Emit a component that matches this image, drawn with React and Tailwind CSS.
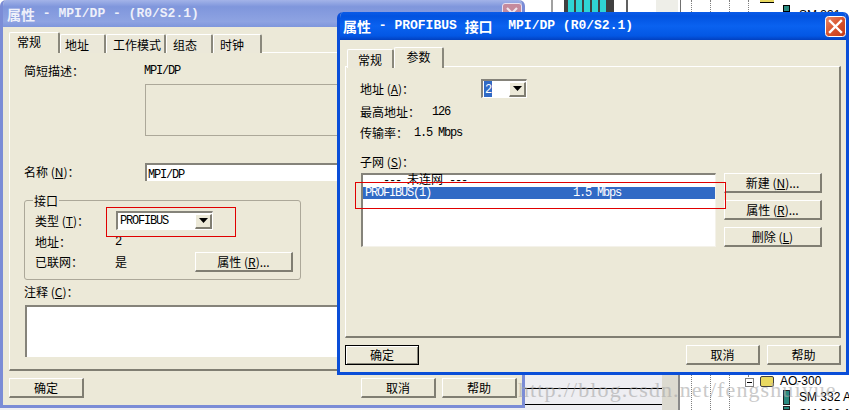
import React from 'react';

// latin runs are narrower than the CJK around them
const L = ({ children, className = '' }) => (
  <span className={`font-['Liberation_Mono'] tracking-[-1.2px] ${className}`}>{children}</span>
);

const Btn = ({ children, className = '', primary = false }) => (
  <div
    className={`h-5 flex items-center justify-center bg-[#ece9d8] shrink-0 ${
      primary
        ? 'border border-black shadow-[inset_1px_1px_0_#fff,inset_-1px_-1px_0_#8a887c]'
        : 'border-t border-l border-t-white border-l-white border-b-2 border-r-2 border-b-[#807e72] border-r-[#807e72]'
    } ${className}`}
  >
    {children}
  </div>
);

const Tab = ({ children, active, width, inset }) => (
  <div
    style={{ width, paddingLeft: inset }}
    className={`flex ${inset ? 'justify-start' : 'justify-center'} border-t border-l border-t-white border-l-white border-r-2 border-r-[#8a887c] rounded-t-[2px] ${
      active ? 'h-[21px] pt-[2px] z-10 bg-[#ece9d8] relative' : 'h-[19px] mt-[2px] pt-[3px] bg-[#ebe8d9]'
    }`}
  >
    {children}
  </div>
);

const Arrow = () => (
  <svg width="9" height="5" viewBox="0 0 9 5">
    <polygon points="0,0 9,0 4.5,5" fill="#000" />
  </svg>
);

const Combo = ({ children, className = '' }) => (
  <div className={`h-[19px] flex items-center justify-between bg-white border-t-2 border-l-2 border-t-[#85837a] border-l-[#85837a] border-b border-r border-b-white border-r-white shrink-0 ${className}`}>
    {children}
    <div className="w-[17px] h-[15px] flex items-center justify-center bg-[#ece9d8] border-t border-l border-t-white border-l-white border-b-2 border-r-2 border-b-[#807e72] border-r-[#807e72]">
      <Arrow />
    </div>
  </div>
);

const CloseBtn = () => (
  <svg width="21" height="21" viewBox="0 0 21 21">
    <defs>
      <linearGradient id="closeRed" x1="0" y1="0" x2="1" y2="1">
        <stop offset="0" stopColor="#e88a6a" />
        <stop offset="0.5" stopColor="#d9532c" />
        <stop offset="1" stopColor="#c23a18" />
      </linearGradient>
    </defs>
    <rect x="0.5" y="0.5" width="20" height="20" rx="3" fill="url(#closeRed)" stroke="#fff" />
    <path d="M5 5 L16 16 M16 5 L5 16" stroke="#fff" strokeWidth="2.4" strokeLinecap="square" />
  </svg>
);

const Dots = ({ className }) => (
  <div className={`absolute w-px border-l border-dotted border-[#808080] ${className}`} />
);

const Backdrop = () => (
  <>
    {/* bits of the program behind the dialogs */}
    <div className="absolute left-[525px] top-0 w-[324px] h-3 bg-white" />
    <div className="absolute left-[551px] top-0 w-[2px] h-3 bg-[#a0a0a0]" />
    <div className="absolute left-[564px] top-0 w-[50px] h-3 flex gap-[2px] bg-[#404040] pl-[4px]">
      <div className="w-[6px] bg-[#2fd4d4]" />
      <div className="w-[6px] bg-[#2fd4d4]" />
      <div className="w-[6px] bg-[#2fd4d4]" />
      <div className="w-[6px] bg-[#2fd4d4]" />
      <div className="w-[6px] bg-[#2fd4d4]" />
    </div>
    <div className="absolute left-[626px] top-0 w-[2px] h-3 bg-[#606060]" />
    <div className="absolute left-[656px] top-0 w-[22px] h-3 bg-[#eeeee8]" />
    <div className="absolute left-[680px] top-0 w-px h-3 bg-[#707070]" />
    <Dots className="left-[691px] top-0 h-3" />
    <Dots className="left-[710px] top-0 h-3" />
    <Dots className="left-[729px] top-0 h-3" />
    <Dots className="left-[748px] top-0 h-3" />
    <div className="absolute left-[760px] top-0 w-[14px] h-[3px] bg-[#e8d860] border-b border-black" />
    <div className="absolute left-[783px] top-[5px] w-[7px] h-[7px] bg-[#2a8a80] border border-black" />
    <div className="absolute left-[799px] top-[8px] h-[4px] overflow-hidden font-['Liberation_Sans'] text-[12px] leading-[14px] text-black">SM 331 AI</div>

    <div className="absolute left-0 top-[408px] w-[662px] h-[2px] bg-[#eeeef2]" />
    <div className="absolute left-[525px] top-[375px] w-[137px] h-[35px] bg-[#eeeef2]" />
    <div className="absolute left-[525px] top-[388px] w-[137px] h-px bg-black" />
    <div className="absolute left-[525px] top-[404px] w-[137px] h-px bg-black" />
    <div className="absolute left-[662px] top-[375px] w-[16px] h-[35px] bg-[#dcdad0]" />
    <div className="absolute left-[678px] top-[375px] w-[2px] h-[35px] bg-[#8a8a8a]" />
    <div className="absolute left-[680px] top-[375px] w-[169px] h-[35px] bg-white" />
    <Dots className="left-[691px] top-[375px] h-[35px]" />
    <Dots className="left-[710px] top-[375px] h-[35px]" />
    <Dots className="left-[729px] top-[375px] h-[35px]" />
    <Dots className="left-[748px] top-[375px] h-[10px]" />
    <div className="absolute left-[745px] top-[378px] w-[9px] h-[9px] bg-white border border-[#808080] flex items-center justify-center">
      <div className="w-[5px] h-px bg-black" />
    </div>
    <div className="absolute left-[760px] top-[376px] w-[14px] h-[11px] bg-[#e8d860] border border-[#404040] rounded-[2px]" />
    <div className="absolute left-[780px] top-[374px] font-['Liberation_Sans'] text-[12px] leading-[14px] text-black">AO-300</div>
    <div className="absolute left-[783px] top-[390px] w-[7px] h-[15px] bg-[#2a8a80] border border-[#202020]" />
    <div className="absolute left-[783px] top-[406px] w-[7px] h-[4px] bg-[#2a8a80] border border-[#202020]" />
    <div className="absolute left-[799px] top-[390px] font-['Liberation_Sans'] text-[12px] leading-[14px] text-black whitespace-nowrap">SM 332 AO</div>
    <div className="absolute left-[799px] top-[407px] h-[3px] overflow-hidden font-['Liberation_Sans'] text-[12px] leading-[14px] text-black whitespace-nowrap">SM 332 AO</div>
  </>
);

const BackDialog = () => (
  <div className="absolute left-0 top-0 w-[525px] h-[408px] rounded-t-[6px] overflow-hidden border-x-[3px] border-b-[3px] border-[#7b8cd6] bg-[#ece9d8] flex flex-col">
    <div className="h-[27px] shrink-0 -mx-[3px] pl-[7px] pt-[5px] flex bg-[linear-gradient(180deg,#a3b3e8_0%,#7f96dc_25%,#8ea3e2_80%,#7f96dc_100%)] text-[#eef0fa]">
      <span className="text-[14px] leading-[18px] font-bold">属性</span>
      <span className="font-['Liberation_Mono'] text-[13px] leading-[18px] font-bold whitespace-pre"> - MPI/DP - (R0/S2.1)</span>
    </div>
    <div className="flex flex-col pl-[6px] pr-[5px] pt-[5px]">
      <div className="flex h-5 relative">
        <Tab active width={51} inset={7}>常规</Tab>
        <Tab width={46} inset={4}>地址</Tab>
        <Tab width={60} inset={6}>工作模式</Tab>
        <Tab width={47} inset={6}>组态</Tab>
        <Tab width={49} inset={6}>时钟</Tab>
      </div>
      <div className="h-[319px] border-t border-l border-t-white border-l-white border-b-2 border-r-2 border-b-[#807e72] border-r-[#807e72] pl-[14px] pt-[11px] flex flex-col">
        <div className="flex h-[14px]">
          <div className="w-[120px]">简短描述：</div>
          <L>MPI/DP</L>
        </div>
        <div className="ml-[121px] mt-[6px] h-[52px] border border-[#aca899] shrink-0" />
        <div className="flex items-center h-[18px] mt-[27px]">
          <div className="w-[121px]">名称 (<u>N</u>)：</div>
          <div className="flex-1 h-[18px] bg-white border-t-2 border-l-2 border-t-[#85837a] border-l-[#85837a] pl-[1px] leading-[15px]">
            <L>MPI/DP</L>
          </div>
        </div>
        <div className="relative mt-[19px] ml-0 w-[277px] h-[80px] border border-[#aca899] rounded-[3px] pl-[10px] pt-[10px] shrink-0">
          <div className="absolute left-[8px] -top-[7px] bg-[#ece9d8] px-[1px] leading-[14px]">接口</div>
          <div className="flex items-center">
            <div className="w-[81px]">类型 (<u>T</u>)：</div>
            <Combo className="w-[97px] pl-[2px]"><L>PROFIBUS</L></Combo>
          </div>
          <div className="flex mt-[5px] h-[14px] items-center">
            <div className="w-[80px]">地址：</div>
            <L>2</L>
          </div>
          <div className="flex items-center mt-[3px]">
            <div className="w-[80px]">已联网：</div>
            <div className="w-[80px]">是</div>
            <Btn className="w-[98px]">属性 (<u>R</u>)...</Btn>
          </div>
        </div>
        <div className="h-[14px] mt-[5px]">注释 (<u>C</u>)：</div>
        <div className="mt-[6px] h-[52px] ml-[1px] bg-white border-t-2 border-l-2 border-t-[#85837a] border-l-[#85837a] shrink-0" />
      </div>
      <div className="flex justify-between mt-[7px]">
        <Btn className="w-[75px]">确定</Btn>
        <div className="flex gap-[6px]">
          <Btn className="w-[75px]">取消</Btn>
          <Btn className="w-[75px]">帮助</Btn>
        </div>
      </div>
    </div>
    {/* close box of the inactive window, mostly under the front dialog */}
    <div className="absolute left-[499px] top-[3px] w-[20px] h-[20px] rounded-[3px] bg-[#c58a9c] border border-[#e8e0f0] flex justify-center pt-[2px]">
      <svg width="14" height="14" viewBox="0 0 14 14">
        <path d="M2 2 L12 12 M12 2 L2 12" stroke="#efe6ee" strokeWidth="2.2" />
      </svg>
    </div>
  </div>
);

const FrontDialog = () => (
  <div className="absolute left-[337px] top-3 w-[512px] h-[363px] rounded-t-[6px] overflow-hidden border-x-[3px] border-b-[3px] border-[#0a4ed8] bg-[#ece9d8] flex flex-col">
    <div className="h-7 shrink-0 -mx-[3px] pl-[6px] pr-[3px] flex items-center justify-between bg-[linear-gradient(180deg,#0a5be8_0%,#0253e0_15%,#0a62f0_50%,#0357e4_85%,#0240c0_100%)] text-white">
      <div className="flex items-center">
        <span className="text-[14px] font-bold leading-[18px]">属性</span>
        <span className="font-['Liberation_Mono'] text-[13px] font-bold leading-[18px] whitespace-pre"> - PROFIBUS </span>
        <span className="text-[14px] font-bold leading-[18px]">接口</span>
        <span className="font-['Liberation_Mono'] text-[13px] font-bold leading-[18px] whitespace-pre">  MPI/DP (R0/S2.1)</span>
      </div>
      <CloseBtn />
    </div>
    <div className="flex flex-col pl-[5px] pr-[5px] pt-[7px]">
      <div className="flex h-[19px] relative">
        <div className="w-[2px]" />
        <Tab width={47}>常规</Tab>
        <Tab active width={50}>参数</Tab>
      </div>
      <div className="h-[272px] border-t border-l border-t-white border-l-white border-b-2 border-r-2 border-b-[#807e72] border-r-[#807e72] pl-[14px] pt-[12px] flex flex-col">
        <div className="flex items-center h-[19px]">
          <div className="w-[121px]">地址 (<u>A</u>)：</div>
          <Combo className="w-[46px] pl-[1px]">
            <span className="bg-[#316ac5] text-white px-[1px] leading-[13px]"><L>2</L></span>
          </Combo>
        </div>
        <div className="flex h-[14px] mt-[7px]">
          <div className="w-[72px]">最高地址：</div>
          <L>126</L>
        </div>
        <div className="flex h-[14px] mt-[7px]">
          <div className="w-[54px]">传输率：</div>
          <L>1.5 Mbps</L>
        </div>
        <div className="h-[14px] mt-[15px]">子网 (<u>S</u>)：</div>
        <div className="flex mt-[4px]">
          <div className="ml-[1px] w-[355px] h-[74px] bg-white border-t-2 border-l-2 border-t-[#85837a] border-l-[#85837a] border-b border-r border-b-[#f4f2ea] border-r-[#f4f2ea] flex flex-col">
            <div className="h-3 pl-[20px] leading-[8px] whitespace-pre"><L>--- </L>未连网<L> ---</L></div>
            <div className="h-3 flex items-center bg-[#316ac5] text-white pl-[2px] leading-[12px]">
              <L className="w-[208px]">PROFIBUS(1)</L>
              <L>1.5 Mbps</L>
            </div>
          </div>
          <div className="flex flex-col gap-[7px] ml-[8px]">
            <Btn className="w-[98px]">新建 (<u>N</u>)...</Btn>
            <Btn className="w-[98px]">属性 (<u>R</u>)...</Btn>
            <Btn className="w-[98px]">删除 (<u>L</u>)</Btn>
          </div>
        </div>
      </div>
      <div className="flex justify-between mt-[7px]">
        <Btn primary className="w-[74px]">确定</Btn>
        <div className="flex gap-[7px]">
          <Btn className="w-[74px]">取消</Btn>
          <Btn className="w-[74px]">帮助</Btn>
        </div>
      </div>
    </div>
  </div>
);

export default function App() {
  return (
    <div className="relative w-[849px] h-[410px] overflow-hidden bg-white font-['Noto_Sans_CJK_SC',sans-serif] text-[12px] leading-[14px] text-black">
      <Backdrop />
      <BackDialog />
      <FrontDialog />
      {/* red annotations drawn on the screenshot */}
      <div className="absolute left-[106px] top-[207px] w-[130px] h-[30px] border border-[#e00000]" />
      <div className="absolute left-[355px] top-[182px] w-[371px] h-[27px] border border-[#e00000]" />
      {/* blog watermark */}
      <div className="absolute left-[518px] top-[377px] font-['Liberation_Serif'] text-[22px] leading-[26px] tracking-[1.1px] text-[#a8a8a8] opacity-60 whitespace-nowrap">http://blog.csdn.net/fengshuiyue</div>
    </div>
  );
}
